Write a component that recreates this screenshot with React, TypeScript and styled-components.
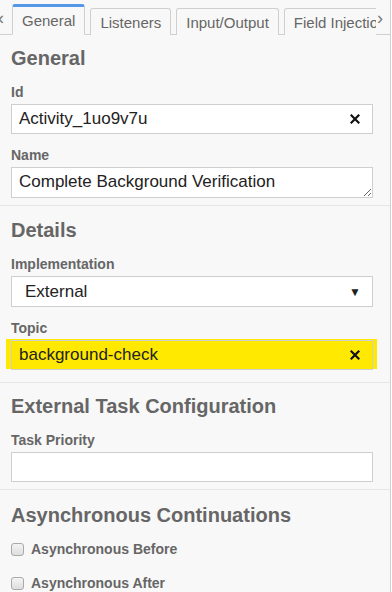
import React from 'react'
import styled, { createGlobalStyle } from 'styled-components'

const GlobalStyle = createGlobalStyle`
  html, body {
    margin: 0;
    padding: 0;
    background: #ffffff;
  }
  body {
    font-family: "Liberation Sans", Arial, sans-serif;
  }
  * {
    box-sizing: border-box;
  }
`

const tabs = ['General', 'Listeners', 'Input/Output', 'Field Injections']

const App = () => {
  return (
    <>
      <GlobalStyle />
      <Panel>
        <TabBar>
          <ScrollArrow side="left">‹</ScrollArrow>
          <TabList>
            {tabs.map((t, i) => (
              <Tab key={t} active={i === 0}>
                {t}
              </Tab>
            ))}
          </TabList>
          <ScrollArrow side="right">›</ScrollArrow>
        </TabBar>

        <Group top={11} bottom={7}>
          <GroupTitle>General</GroupTitle>
          <Field>
            <Label>Id</Label>
            <InputBox>
              <TextInput readOnly value="Activity_1uo9v7u" />
              <ClearButton />
            </InputBox>
          </Field>
          <Field>
            <Label>Name</Label>
            <TextArea readOnly value="Complete Background Verification" />
          </Field>
        </Group>

        <Group top={12} bottom={12}>
          <GroupTitle>Details</GroupTitle>
          <Field>
            <Label>Implementation</Label>
            <SelectBox>
              <SelectText>External</SelectText>
              <Caret>▼</Caret>
            </SelectBox>
          </Field>
          <Field>
            <Label>Topic</Label>
            <InputBox highlighted>
              <TextInput readOnly value="background-check" />
              <ClearButton />
            </InputBox>
          </Field>
        </Group>

        <Group top={11} bottom={7}>
          <GroupTitle>External Task Configuration</GroupTitle>
          <Field>
            <Label>Task Priority</Label>
            <InputBox>
              <TextInput readOnly value="" />
            </InputBox>
          </Field>
        </Group>

        <Group top={13} bottom={0} last>
          <GroupTitle>Asynchronous Continuations</GroupTitle>
          <CheckRow>
            <CheckBox />
            <CheckLabel>Asynchronous Before</CheckLabel>
          </CheckRow>
          <CheckRow>
            <CheckBox />
            <CheckLabel>Asynchronous After</CheckLabel>
          </CheckRow>
        </Group>
      </Panel>
    </>
  )
}

const ClearButton = () => (
  <ClearIcon viewBox="0 0 10 10">
    <path d="M1.5 1.5 L8.5 8.5 M8.5 1.5 L1.5 8.5" stroke="#111" strokeWidth="2.2" strokeLinecap="square" />
  </ClearIcon>
)

const Panel = styled.div`
  width: 391px;
  height: 592px;
  overflow: hidden;
  background: #f8f8f8;
  border-right: 1px solid #cfcfcf;
  color: #666;
`

const TabBar = styled.div`
  position: relative;
  height: 35px;
  padding: 0 14px 0 12px;
  border-bottom: 1px solid #cfcfcf;
  display: flex;
  align-items: flex-end;
`

const TabList = styled.div`
  display: flex;
  gap: 5px;
  height: 31px;
  align-items: flex-end;
  overflow: hidden;
  flex: 1;
  margin-bottom: -1px;
`

const Tab = styled.div<{ active?: boolean }>`
  flex-shrink: 0;
  height: ${({ active }) => (active ? '31px' : '27px')};
  padding: 0 9px;
  display: flex;
  align-items: center;
  font-size: 15px;
  color: #666;
  white-space: nowrap;
  background: #f8f8f8;
  border: 1px solid #cfcfcf;
  border-bottom: ${({ active }) => (active ? '1px solid #f8f8f8' : 'none')};
  border-top: ${({ active }) => (active ? '3px solid #5596e6' : '1px solid #cfcfcf')};
  border-radius: 3px 3px 0 0;
  padding-top: ${({ active }) => (active ? '0' : '1px')};
`

const ScrollArrow = styled.div<{ side: 'left' | 'right' }>`
  position: absolute;
  top: 8px;
  ${({ side }) => (side === 'left' ? 'left: -3px;' : 'right: 6px;')}
  font-size: 18px;
  line-height: 20px;
  color: #777;
  background: ${({ side }) => (side === 'right' ? '#f8f8f8' : 'transparent')};
  padding: 0 1px;
`

const Group = styled.div<{ last?: boolean; top: number; bottom: number }>`
  padding: ${({ top }) => top}px 11px ${({ bottom }) => bottom}px 11px;
  border-bottom: ${({ last }) => (last ? 'none' : '1px solid #e6e6e6')};
`

const GroupTitle = styled.div`
  font-size: 20px;
  line-height: 24px;
  font-weight: bold;
  color: #666;
  margin-bottom: 13px;
`

const Field = styled.div`
  margin-bottom: 12px;
  &:last-child {
    margin-bottom: 0;
  }
`

const Label = styled.div`
  font-size: 14px;
  line-height: 18px;
  font-weight: bold;
  color: #666;
  margin-bottom: 3px;
`

const InputBox = styled.div<{ highlighted?: boolean }>`
  display: flex;
  align-items: center;
  width: 362px;
  height: 30px;
  border: 1px solid #cfcfcf;
  background: ${({ highlighted }) => (highlighted ? '#ffe900' : '#ffffff')};
  box-shadow: ${({ highlighted }) =>
    highlighted ? '-5px -1px 0 0 #ffe900, 4px -1px 0 0 #ffe900' : 'none'};
  padding: 0 12px 0 7px;
`

const TextInput = styled.input`
  flex: 1;
  min-width: 0;
  border: none;
  outline: none;
  background: transparent;
  font-family: "Liberation Sans", Arial, sans-serif;
  font-size: 17px;
  color: #222;
  padding: 0;
`

const ClearIcon = styled.svg`
  width: 10px;
  height: 10px;
  flex-shrink: 0;
`

const TextArea = styled.textarea`
  display: block;
  width: 362px;
  height: 31px;
  border: 1px solid #cfcfcf;
  border-radius: 0;
  background: #ffffff;
  font-family: "Liberation Sans", Arial, sans-serif;
  font-size: 17px;
  line-height: 20px;
  color: #222;
  padding: 4px 7px;
  resize: vertical;
  overflow: hidden;
  outline: none;
`

const SelectBox = styled.div`
  display: flex;
  align-items: center;
  justify-content: space-between;
  width: 362px;
  height: 31px;
  border: 1px solid #cfcfcf;
  background: #ffffff;
  padding: 0 11px 0 13px;
`

const SelectText = styled.span`
  font-size: 17px;
  color: #222;
`

const Caret = styled.span`
  font-size: 12px;
  color: #222;
`

const CheckRow = styled.div`
  display: flex;
  align-items: center;
  gap: 7px;
  height: 18px;
  margin-bottom: 16px;
`

const CheckBox = styled.span`
  width: 13px;
  height: 13px;
  border: 1px solid #a9a9a9;
  border-radius: 3px;
  background: linear-gradient(#f4f4f4, #dedede);
`

const CheckLabel = styled.span`
  font-size: 14px;
  font-weight: bold;
  color: #666;
`

export default App
